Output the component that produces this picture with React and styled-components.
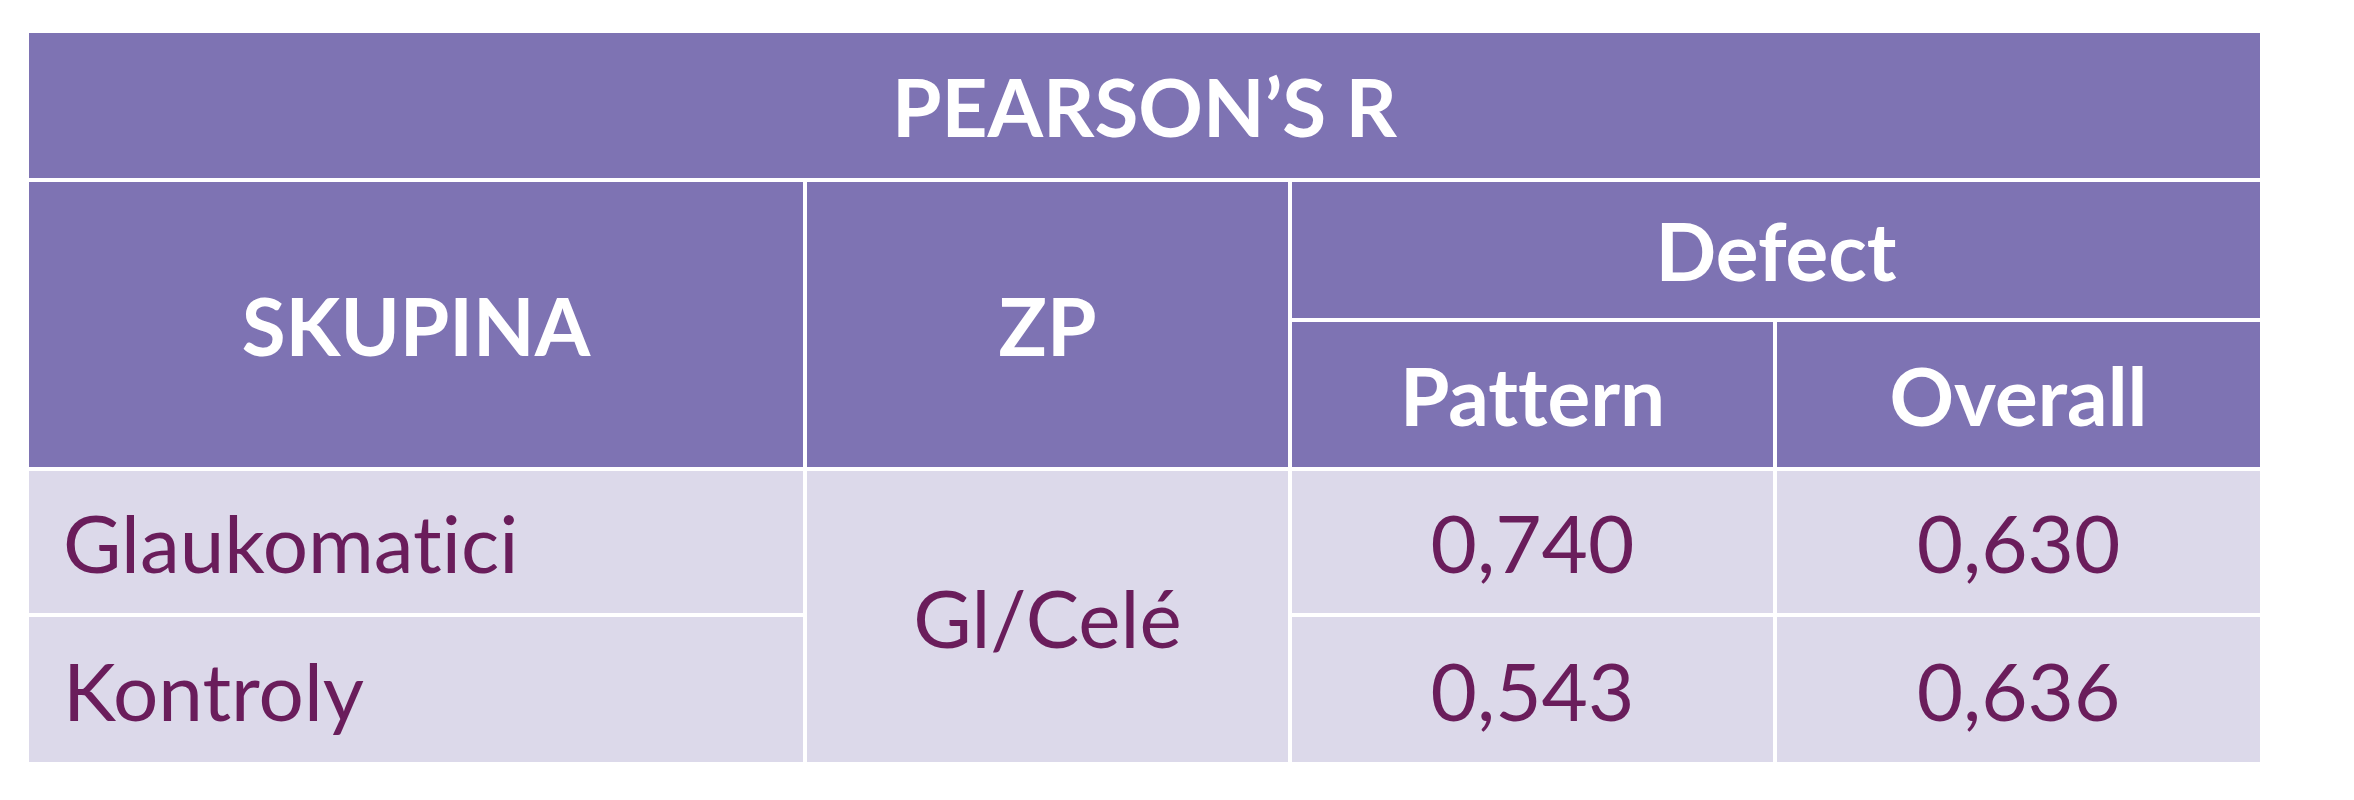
import React from 'react';
import styled, {createGlobalStyle} from 'styled-components';

const GlobalStyle = createGlobalStyle`
  html, body {
    margin: 0;
    padding: 0;
    background: #ffffff;
  }
  body {
    font-family: Lato, "Open Sans", "Liberation Sans", sans-serif;
    font-variant-ligatures: none;
    font-feature-settings: "liga" 0, "clig" 0;
  }
`;

const Page = styled.div`
  padding: 29px 0 0 25px;
`;

const Table = styled.table`
  border-collapse: separate;
  border-spacing: 4px;
  table-layout: fixed;
  width: 2239px;
`;

const HeadCell = styled.th`
  background: #7e73b3;
  color: #ffffff;
  font-weight: 700;
  font-size: 80px;
  line-height: 1;
  text-align: center;
  vertical-align: middle;
  padding: 0;
  height: ${props => props.$height}px;
`;

const BodyCell = styled.td`
  background: #dcd9ea;
  color: #6a1d5b;
  font-weight: 400;
  font-size: 80px;
  line-height: 1;
  text-align: ${props => (props.$left ? 'left' : 'center')};
  vertical-align: middle;
  padding: ${props => (props.$left ? '0 0 0 34px' : '0')};
  height: ${props => props.$height}px;
`;

const rows = [
    {group: 'Glaukomatici', pattern: '0,740', overall: '0,630', height: 142},
    {group: 'Kontroly', pattern: '0,543', overall: '0,636', height: 145},
];

export default function App() {
    return (
        <Page>
            <GlobalStyle />
            <Table>
                <colgroup>
                    <col style={{width: 774}} />
                    <col style={{width: 481}} />
                    <col style={{width: 481}} />
                    <col style={{width: 483}} />
                </colgroup>
                <thead>
                    <tr>
                        <HeadCell colSpan={4} $height={145}>PEARSON’S R</HeadCell>
                    </tr>
                    <tr>
                        <HeadCell rowSpan={2}>SKUPINA</HeadCell>
                        <HeadCell rowSpan={2}>ZP</HeadCell>
                        <HeadCell colSpan={2} $height={136}>Defect</HeadCell>
                    </tr>
                    <tr>
                        <HeadCell $height={145}>Pattern</HeadCell>
                        <HeadCell $height={145}>Overall</HeadCell>
                    </tr>
                </thead>
                <tbody>
                    {rows.map((row, index) => (
                        <tr key={row.group}>
                            <BodyCell $left $height={row.height}>{row.group}</BodyCell>
                            {index === 0 && (
                                <BodyCell rowSpan={2}>Gl/Celé</BodyCell>
                            )}
                            <BodyCell $height={row.height}>{row.pattern}</BodyCell>
                            <BodyCell $height={row.height}>{row.overall}</BodyCell>
                        </tr>
                    ))}
                </tbody>
            </Table>
        </Page>
    );
}
